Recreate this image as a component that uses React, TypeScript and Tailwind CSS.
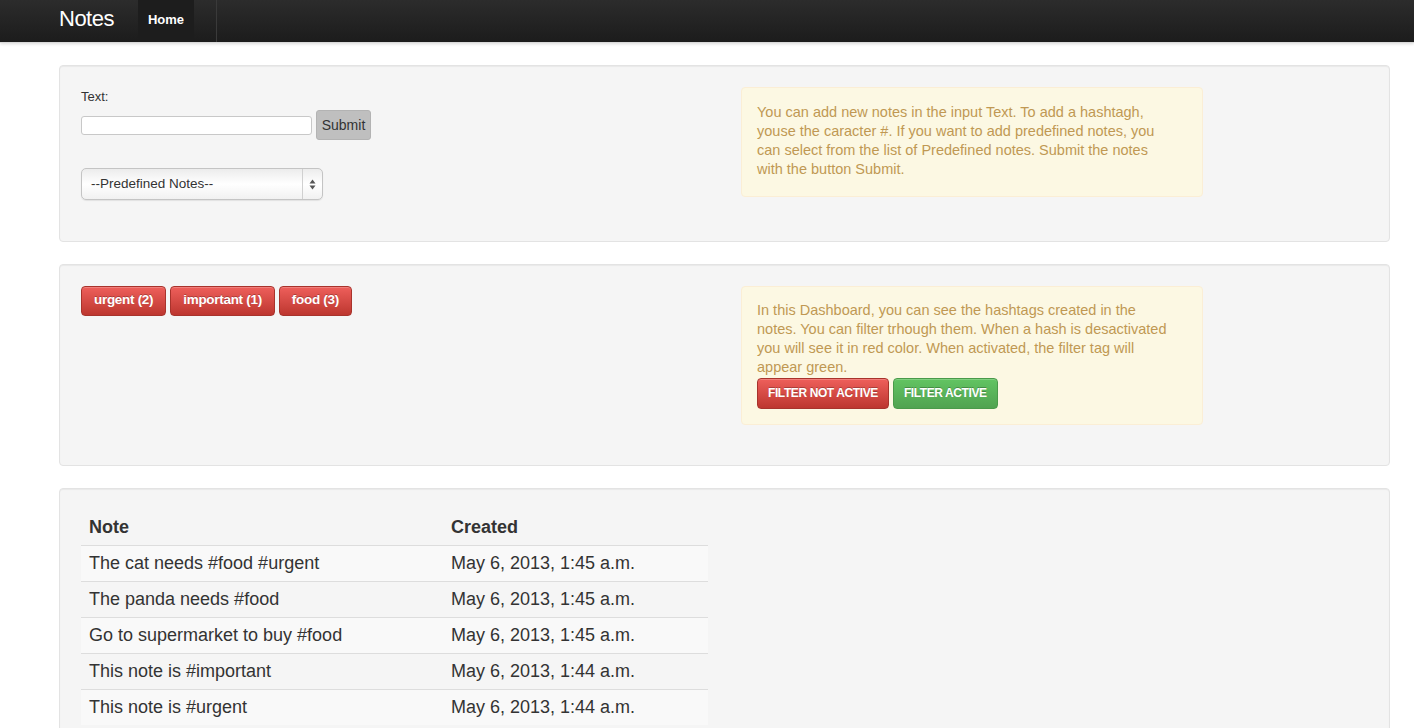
const notes = [
  { text: "The cat needs #food #urgent", created: "May 6, 2013, 1:45 a.m." },
  { text: "The panda needs #food", created: "May 6, 2013, 1:45 a.m." },
  { text: "Go to supermarket to buy #food", created: "May 6, 2013, 1:45 a.m." },
  { text: "This note is #important", created: "May 6, 2013, 1:44 a.m." },
  { text: "This note is #urgent", created: "May 6, 2013, 1:44 a.m." },
];

const tags = ["urgent (2)", "important (1)", "food (3)"];

const dangerBtn =
  "rounded-[4px] border border-[#a8332c] bg-gradient-to-b from-[#ee5f5b] to-[#bd362f] text-white font-bold [text-shadow:0_-1px_0_rgba(0,0,0,0.25)] shadow-[inset_0_1px_0_rgba(255,255,255,0.2)]";

function Well({ children, className = "" }: { children: React.ReactNode; className?: string }) {
  return (
    <div className={"rounded-[4px] border border-[#e3e3e3] bg-[#f5f5f5] p-[21px] shadow-[inset_0_1px_1px_rgba(0,0,0,0.05)] " + className}>
      {children}
    </div>
  );
}

function Alert({ children, className = "" }: { children: React.ReactNode; className?: string }) {
  return (
    <div className={"w-[462px] rounded-[4px] border border-[#fbeed5] bg-[#fcf8e3] px-[15px] text-[14.5px] leading-[19px] text-[#c09853] " + className}>
      {children}
    </div>
  );
}

export default function App() {
  return (
    <div className="min-h-screen bg-white font-['Liberation_Sans',Arial,sans-serif] text-[#333]">
      <div className="h-[43px] border-b border-[#d9d9d9] bg-gradient-to-b from-[#2c2c2c] to-[#1c1c1c] shadow-[0_1px_3px_rgba(0,0,0,0.15)]">
        <div className="flex h-[42px] items-stretch pl-[59px]">
          <div className="flex items-center pb-[5px] pr-[24px] text-[22px] tracking-[-0.5px] text-white">Notes</div>
          <div className="flex items-center bg-[#1d1d1d] px-[10px] pb-[3px] text-[13px] font-bold text-white">Home</div>
          <div className="ml-[22px] w-px bg-[#3a3a3a]" />
        </div>
      </div>

      <div className="ml-[59px] mt-[22px] flex w-[1331px] flex-col gap-[22px] pb-[20px]">
        <Well className="h-[177px]">
          <div className="flex">
            <div className="w-[660px]">
              <div className="mt-[1px] text-[13px] leading-[18px] text-[#333]">Text:</div>
              <div className="mt-[4px] flex items-center gap-[4px]">
                <div className="h-[19px] w-[231px] rounded-[3px] border border-[#c8c8c8] bg-white" />
                <div className="flex h-[30px] w-[55px] items-center justify-center rounded-[3px] border border-[#b3b3b3] bg-[#bfbfbf] text-[14px] text-[#333]">
                  Submit
                </div>
              </div>
              <div className="mt-[28px] flex h-[32px] w-[242px] items-center rounded-[5px] border border-[#c4c4c4] bg-gradient-to-b from-[#ececec] via-white to-[#f1f1f1] shadow-[0_1px_1px_rgba(0,0,0,0.08)]">
                <span className="flex-1 pl-[9px] text-[13.5px] text-[#333]">--Predefined Notes--</span>
                <span className="flex h-full w-[20px] items-center justify-center border-l border-[#d0d0d0]">
                  <svg width="7" height="11" viewBox="0 0 7 11">
                    <path d="M3.5 0.5 L6.5 4.5 L0.5 4.5 Z" fill="#555" />
                    <path d="M3.5 10.5 L6.5 6.5 L0.5 6.5 Z" fill="#555" />
                  </svg>
                </span>
              </div>
            </div>
            <Alert className="h-[110px] pt-[15px]">
              <p className="w-[405px]">
                You can add new notes in the input Text. To add a hashtagh, youse the caracter #. If you want to add
                predefined notes, you can select from the list of Predefined notes. Submit the notes with the button
                Submit.
              </p>
            </Alert>
          </div>
        </Well>

        <Well className="h-[202px]">
          <div className="flex">
            <div className="flex w-[660px] items-start gap-[4px]">
              {tags.map((t) => (
                <div key={t} className={dangerBtn + " flex h-[30px] items-center px-[12px] pb-[1px] text-[13.5px] tracking-[-0.3px]"}>
                  {t}
                </div>
              ))}
            </div>
            <Alert className="h-[139px] pt-[14px]">
              <p className="w-[412px]">
                In this Dashboard, you can see the hashtags created in the notes. You can filter trhough them. When a hash
                is desactivated you will see it in red color. When activated, the filter tag will appear green.
              </p>
              <div className="mt-[1px] flex gap-[4px]">
                <div className={dangerBtn + " flex h-[31px] items-center px-[10px] text-[12px] tracking-[-0.4px]"}>
                  FILTER NOT ACTIVE
                </div>
                <div className="flex h-[31px] items-center rounded-[4px] border border-[#4a9a4a] bg-gradient-to-b from-[#62c462] to-[#51a351] px-[10px] text-[12px] font-bold tracking-[-0.4px] text-white shadow-[inset_0_1px_0_rgba(255,255,255,0.2)] [text-shadow:0_-1px_0_rgba(0,0,0,0.25)]">
                  FILTER ACTIVE
                </div>
              </div>
            </Alert>
          </div>
        </Well>

        <Well className="pt-[20px]">
          <table className="w-[627px] border-collapse text-[18px] leading-[20px] text-[#333]">
            <thead>
              <tr>
                <th className="h-[36px] w-[362px] px-[8px] text-left font-bold">Note</th>
                <th className="h-[36px] px-[8px] text-left font-bold">Created</th>
              </tr>
            </thead>
            <tbody>
              {notes.map((n, i) => (
                <tr key={n.text} className={i % 2 === 0 ? "bg-[#f9f9f9]" : ""}>
                  <td className="h-[36px] border-t border-[#dddddd] px-[8px]">{n.text}</td>
                  <td className="h-[36px] border-t border-[#dddddd] px-[8px]">{n.created}</td>
                </tr>
              ))}
            </tbody>
          </table>
        </Well>
      </div>
    </div>
  );
}
